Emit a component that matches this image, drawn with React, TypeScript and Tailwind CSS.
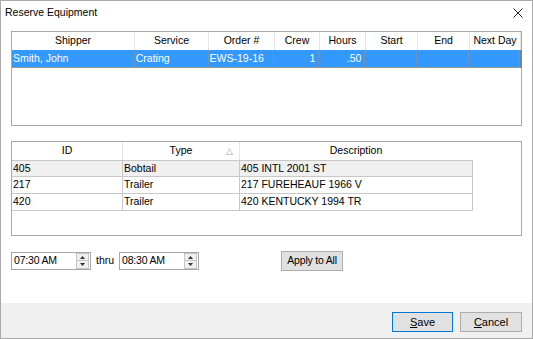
import React from 'react';

const font = { fontFamily: '"Liberation Sans", Arial, sans-serif' };

const topCols = [
  { name: 'Shipper', w: 'w-[123px]', value: 'Smith, John', right: false },
  { name: 'Service', w: 'w-[74px]', value: 'Crating', right: false },
  { name: 'Order #', w: 'w-[66px]', value: 'EWS-19-16', right: false },
  { name: 'Crew', w: 'w-[45px]', value: '1', right: true },
  { name: 'Hours', w: 'w-[46px]', value: '.50', right: true },
  { name: 'Start', w: 'w-[52px]', value: '', right: false },
  { name: 'End', w: 'w-[52px]', value: '', right: false },
  { name: 'Next Day', w: 'w-[51px]', value: '', right: false },
];

const equipment = [
  { id: '405', type: 'Bobtail', desc: '405 INTL 2001 ST' },
  { id: '217', type: 'Trailer', desc: '217 FUREHEAUF 1966 V' },
  { id: '420', type: 'Trailer', desc: '420 KENTUCKY 1994 TR' },
];

function TimeBox({ value }: { value: string }) {
  return (
    <div className="flex h-[18px] w-[80px] items-center border border-[#a6a6a6] bg-white">
      <span className="flex-1 pl-[2px] text-[10.5px] tracking-[-0.2px]">{value}</span>
      <div className="mr-[1px] flex h-[16px] w-[13px] flex-col">
        <div className="flex h-[8px] items-center justify-center border border-[#c6c6c6] bg-[#f0f0f0]">
          <svg width="5" height="3" viewBox="0 0 5 3"><path d="M0 3 L2.5 0 L5 3 Z" fill="#333" /></svg>
        </div>
        <div className="flex h-[8px] items-center justify-center border border-t-0 border-[#c6c6c6] bg-[#f0f0f0]">
          <svg width="5" height="3" viewBox="0 0 5 3"><path d="M0 0 L2.5 3 L5 0 Z" fill="#333" /></svg>
        </div>
      </div>
    </div>
  );
}

export default function App() {
  return (
    <div style={font} className="flex h-[339px] w-[533px] flex-col border border-[#aaaaaa] bg-white text-[10.5px] text-black">
      {/* Title bar */}
      <div className="flex h-[24px] items-center justify-between pl-[4px] pr-[9px]">
        <span className="text-[10.5px]">Reserve Equipment</span>
        <svg width="10" height="10" viewBox="0 0 10 10">
          <path d="M0.5 0.5 L9.5 9.5 M9.5 0.5 L0.5 9.5" stroke="#222" strokeWidth="1" />
        </svg>
      </div>

      <div className="flex flex-1 flex-col px-[10px] pt-[6px]">
        {/* Order grid */}
        <div className="h-[95px] border border-[#a9a9a9] bg-white">
          <div className="flex h-[18px]">
            {topCols.map((c) => (
              <div key={c.name} className={`${c.w} flex items-center justify-center border-r border-[#e5e5e5]`}>
                {c.name}
              </div>
            ))}
          </div>
          <div className="flex h-[18px] w-[510px] border-b border-[#9a9a9a] border-r-2 border-r-[#808080] bg-[#3399ff] text-white">
            {topCols.map((c) => (
              <div
                key={c.name}
                className={`${c.w} flex items-center border-r border-[#6d93bb] px-[1px] ${c.right ? 'justify-end pr-[3px]' : ''}`}
              >
                {c.value}
              </div>
            ))}
          </div>
        </div>

        {/* Equipment grid */}
        <div className="mt-[15px] h-[95px] border border-[#a9a9a9] bg-white">
          <div className="flex h-[18px]">
            <div className="flex w-[111px] items-center justify-center border-r border-[#e5e5e5]">ID</div>
            <div className="relative flex w-[117px] items-center justify-center border-r border-[#e5e5e5]">
              Type
              <span className="absolute right-[6px] top-[3px] text-[9px] text-[#a0a0a0]">△</span>
            </div>
            <div className="flex w-[232px] items-center justify-center">Description</div>
          </div>
          {equipment.map((e, i) => (
            <div
              key={e.id}
              className={`flex h-[17px] w-[461px] border-y border-r border-[#c8c8c8] ${i > 0 ? 'border-t-0' : ''} ${i === 0 ? 'bg-[#f0f0f0]' : 'bg-white'}`}
            >
              <div className="flex w-[111px] items-center border-r border-[#c8c8c8] pl-[1px]">{e.id}</div>
              <div className="flex w-[117px] items-center border-r border-[#c8c8c8] pl-[1px]">{e.type}</div>
              <div className="flex flex-1 items-center pl-[1px]">{e.desc}</div>
            </div>
          ))}
        </div>

        {/* Time controls */}
        <div className="mt-[15px] flex h-[20px] items-center">
          <TimeBox value="07:30 AM" />
          <span className="ml-[5px] mr-[5px]">thru</span>
          <TimeBox value="08:30 AM" />
          <button className="ml-[82px] h-[20px] w-[62px] border border-[#adadad] bg-[#e1e1e1] text-[10.5px] tracking-[-0.2px]">
            Apply to All
          </button>
        </div>
      </div>

      {/* Footer */}
      <div className="flex h-[35px] items-start justify-end gap-[7px] bg-[#f0f0f0] pr-[10px] pt-[9px]">
        <button className="h-[20px] w-[61px] border border-[#0078d7] bg-[#e1e1e1] text-[11px]">
          <span className="underline">S</span>ave
        </button>
        <button className="h-[20px] w-[62px] border border-[#adadad] bg-[#e1e1e1] text-[11px]">
          <span className="underline">C</span>ancel
        </button>
      </div>
    </div>
  );
}
